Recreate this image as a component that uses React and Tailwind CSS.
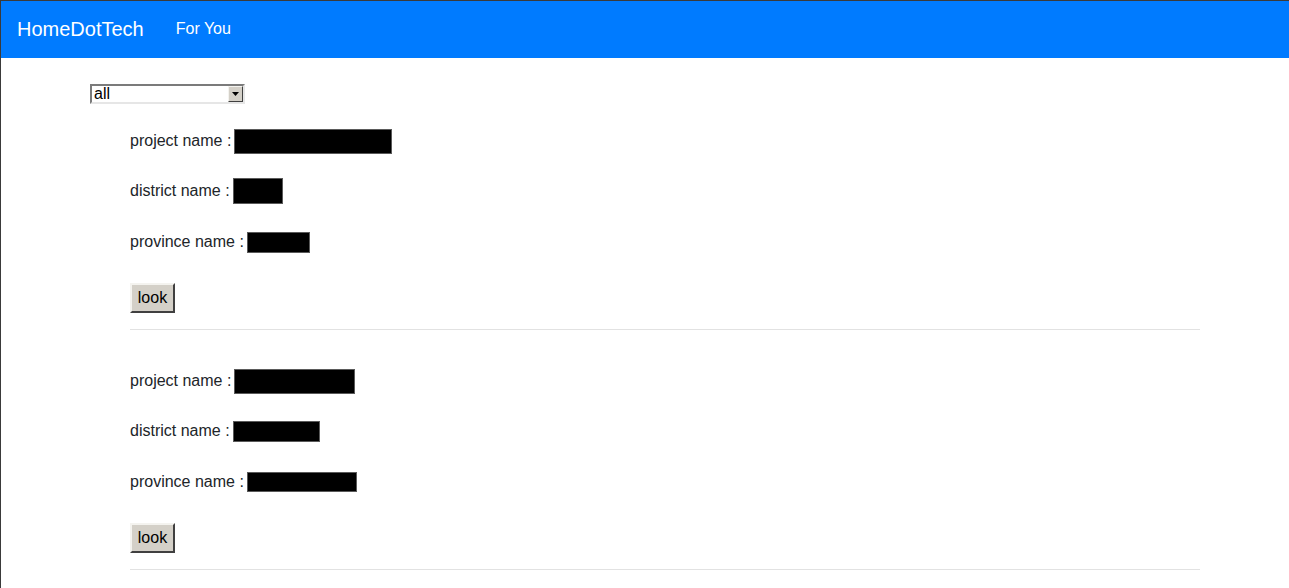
import React from "react";

const projects = [
  { id: 1, project: 158, district: 50, province: 63, pH: 25, dH: 26, vH: 21 },
  { id: 2, project: 121, district: 87, province: 110, pH: 25, dH: 21, vH: 20 },
];

const Redacted = ({ width, height }) => (
  <span
    className="inline-block bg-black border border-[#5a5a5a]"
    style={{ width, height }}
  />
);

const Field = ({ label, width, height, gap }) => (
  <div className={`flex items-center h-6 ${gap}`}>
    <span className="mr-[3px]">{label} :</span>
    <Redacted width={width} height={height} />
  </div>
);

const ProjectItem = ({ item, first }) => (
  <li className={first ? "pt-[25px]" : "pt-[39px]"}>
    <Field label="project name" width={item.project} height={item.pH} gap="mb-[26px]" />
    <Field label="district name" width={item.district} height={item.dH} gap="mb-[27px]" />
    <Field label="province name" width={item.province} height={item.vH} gap="" />
    <button className="mt-[29px] h-[30px] w-[45px] bg-[#d4d0c8] text-black border-2 border-t-[#f4f3ef] border-l-[#f4f3ef] border-b-[#404040] border-r-[#404040] leading-none">
      look
    </button>
    <hr className="mt-[16px] border-0 border-t border-[#e2e2e2]" />
  </li>
);

export default function App() {
  return (
    <div
      className="min-h-[588px] bg-white border-l border-t border-[#3a3a3a] text-[16px] text-[#212529]"
      style={{ fontFamily: '"Liberation Sans", Arial, sans-serif' }}
    >
      {/* NAVBAR */}
      <nav className="h-[57px] bg-[#007bff] flex items-center pl-4">
        <span className="text-white text-[20px] mr-[32px] -mt-[2px]">HomeDotTech</span>
        <span className="text-white text-[16px] -mt-[2px]">For You</span>
      </nav>

      {/* CONTENT */}
      <div className="pl-[89px] pr-[89px]">
        <div className="mt-[26px] w-[155px] h-[20px] flex items-center bg-white border-2 border-t-[#7b7b7b] border-l-[#7b7b7b] border-b-[#e6e6e6] border-r-[#e6e6e6]">
          <span className="flex-1 pl-[2px] text-black leading-none text-[16px]">all</span>
          <span className="w-[15px] h-[16px] bg-[#d4d0c8] border border-t-[#f4f3ef] border-l-[#f4f3ef] border-b-[#404040] border-r-[#404040] flex items-center justify-center">
            <svg width="7" height="4" viewBox="0 0 7 4">
              <path d="M0 0h7L3.5 4z" fill="#000" />
            </svg>
          </span>
        </div>

        <ul className="pl-[40px]">
          {projects.map((p, i) => (
            <ProjectItem key={p.id} item={p} first={i === 0} />
          ))}
        </ul>
      </div>
    </div>
  );
}
